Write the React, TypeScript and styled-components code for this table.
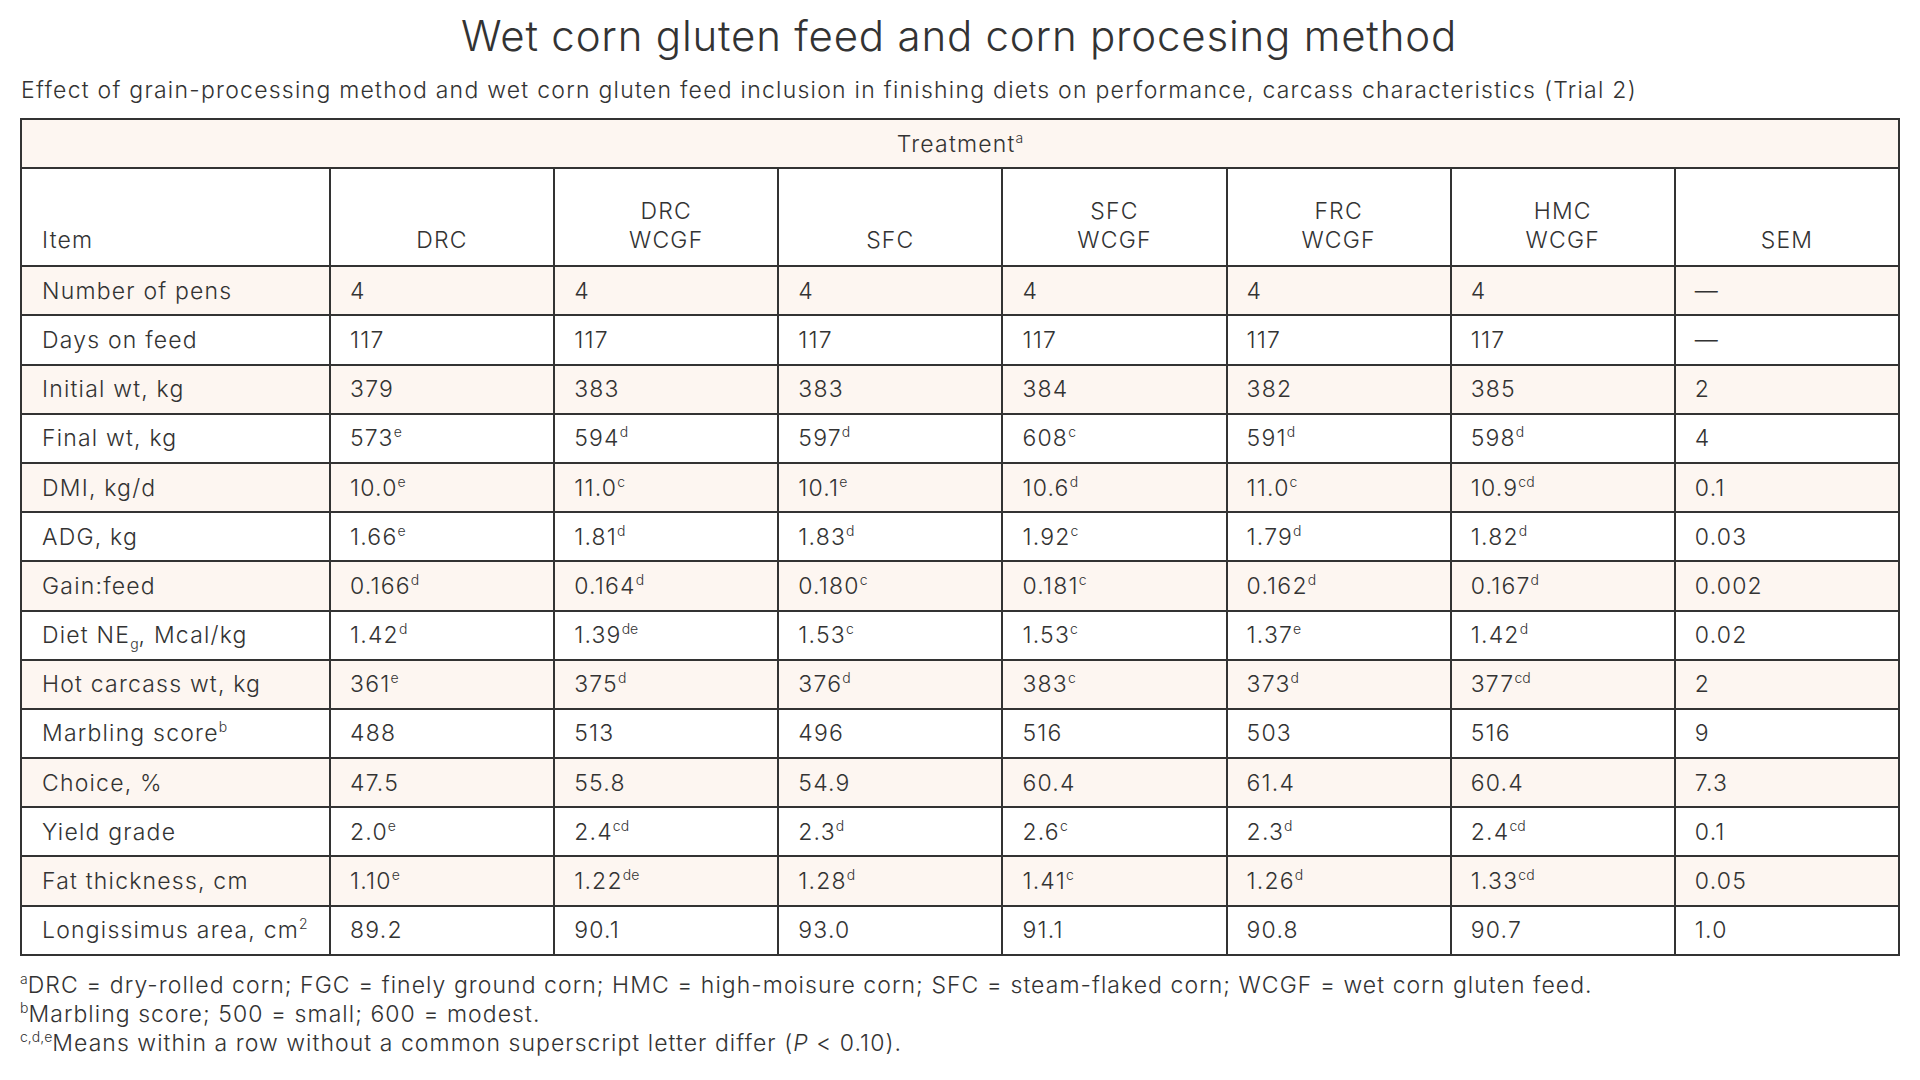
import styled, { createGlobalStyle } from "styled-components";

const GlobalStyle = createGlobalStyle`
  html, body {
    margin: 0;
    padding: 0;
    background: #ffffff;
  }
  body {
    font-family: Inter, "Open Sans", "Liberation Sans", sans-serif;
    color: #2e2e2e;
  }
`;

const Page = styled.div`
  width: 1920px;
  height: 1080px;
  box-sizing: border-box;
  padding: 10px 22px 0 20px;
  overflow: hidden;
`;

const Title = styled.h1`
  margin: 0;
  text-align: center;
  font-size: 42px;
  font-weight: 300;
  letter-spacing: 0.8px;
  line-height: 52px;
  color: #333;
`;

const Subtitle = styled.p`
  margin: 12px 0 0 1px;
  font-size: 23px;
  font-weight: 300;
  letter-spacing: 1.25px;
  line-height: 32px;
  color: #333;
`;

const Table = styled.table`
  margin-top: 12px;
  width: 1880px;
  border-collapse: collapse;
  table-layout: fixed;
  border: 2px solid #333;
  font-size: 23px;
  font-weight: 300;
  letter-spacing: 1.2px;
  color: #333;
`;

const Row = styled.tr<{ $shaded?: boolean }>`
  height: 49.2px;
  background: ${(p) => (p.$shaded ? "#fdf6f1" : "#ffffff")};
  border-bottom: 2px solid #333;
`;

const SpanCell = styled.th`
  font-weight: 300;
  text-align: center;
  padding: 0;
`;

const HeadCell = styled.th<{ $left?: boolean }>`
  box-sizing: border-box;
  height: 98px;
  font-weight: 300;
  text-align: ${(p) => (p.$left ? "left" : "center")};
  vertical-align: bottom;
  padding: 0 0 10px ${(p) => (p.$left ? "20px" : "0")};
  line-height: 29px;
  border-left: 2px solid #333;
  &:first-child {
    border-left: none;
  }
`;

const Cell = styled.td<{ $item?: boolean }>`
  padding: 0 0 0 ${(p) => (p.$item ? "20px" : "19px")};
  border-left: 2px solid #333;
  white-space: nowrap;
  &:first-child {
    border-left: none;
  }
`;

const Sup = styled.sup`
  font-size: 14px;
  vertical-align: 9px;
  line-height: 0;
  letter-spacing: 0;
  margin-left: 0;
`;

const Sub = styled.sub`
  font-size: 14px;
  vertical-align: -6px;
  line-height: 0;
  letter-spacing: 0;
`;

const Notes = styled.div`
  margin-top: 15px;
  font-size: 23px;
  font-weight: 300;
  letter-spacing: 1.05px;
  line-height: 29px;
  color: #333;
`;

const Note = styled.p`
  margin: 0;
`;

type Val = [string, string?];

const cols = [
  ["DRC"],
  ["DRC", "WCGF"],
  ["SFC"],
  ["SFC", "WCGF"],
  ["FRC", "WCGF"],
  ["HMC", "WCGF"],
  ["SEM"],
];

const rows: { label: React.ReactNode; vals: Val[] }[] = [
  { label: "Number of pens", vals: [["4"], ["4"], ["4"], ["4"], ["4"], ["4"], ["—"]] },
  { label: "Days on feed", vals: [["117"], ["117"], ["117"], ["117"], ["117"], ["117"], ["—"]] },
  { label: "Initial wt, kg", vals: [["379"], ["383"], ["383"], ["384"], ["382"], ["385"], ["2"]] },
  { label: "Final wt, kg", vals: [["573", "e"], ["594", "d"], ["597", "d"], ["608", "c"], ["591", "d"], ["598", "d"], ["4"]] },
  { label: "DMI, kg/d", vals: [["10.0", "e"], ["11.0", "c"], ["10.1", "e"], ["10.6", "d"], ["11.0", "c"], ["10.9", "cd"], ["0.1"]] },
  { label: "ADG, kg", vals: [["1.66", "e"], ["1.81", "d"], ["1.83", "d"], ["1.92", "c"], ["1.79", "d"], ["1.82", "d"], ["0.03"]] },
  { label: "Gain:feed", vals: [["0.166", "d"], ["0.164", "d"], ["0.180", "c"], ["0.181", "c"], ["0.162", "d"], ["0.167", "d"], ["0.002"]] },
  {
    label: (
      <>
        Diet NE<Sub>g</Sub>, Mcal/kg
      </>
    ),
    vals: [["1.42", "d"], ["1.39", "de"], ["1.53", "c"], ["1.53", "c"], ["1.37", "e"], ["1.42", "d"], ["0.02"]],
  },
  { label: "Hot carcass wt, kg", vals: [["361", "e"], ["375", "d"], ["376", "d"], ["383", "c"], ["373", "d"], ["377", "cd"], ["2"]] },
  {
    label: (
      <>
        Marbling score<Sup>b</Sup>
      </>
    ),
    vals: [["488"], ["513"], ["496"], ["516"], ["503"], ["516"], ["9"]],
  },
  { label: "Choice, %", vals: [["47.5"], ["55.8"], ["54.9"], ["60.4"], ["61.4"], ["60.4"], ["7.3"]] },
  { label: "Yield grade", vals: [["2.0", "e"], ["2.4", "cd"], ["2.3", "d"], ["2.6", "c"], ["2.3", "d"], ["2.4", "cd"], ["0.1"]] },
  { label: "Fat thickness, cm", vals: [["1.10", "e"], ["1.22", "de"], ["1.28", "d"], ["1.41", "c"], ["1.26", "d"], ["1.33", "cd"], ["0.05"]] },
  {
    label: (
      <>
        Longissimus area, cm<Sup>2</Sup>
      </>
    ),
    vals: [["89.2"], ["90.1"], ["93.0"], ["91.1"], ["90.8"], ["90.7"], ["1.0"]],
  },
];

export default function App() {
  return (
    <>
      <GlobalStyle />
      <Page>
        <Title>Wet corn gluten feed and corn procesing method</Title>
        <Subtitle>
          Effect of grain-processing method and wet corn gluten feed inclusion in finishing diets on
          performance, carcass characteristics (Trial 2)
        </Subtitle>
        <Table>
          <colgroup>
            <col style={{ width: 309 }} />
            {cols.map((_, i) => (
              <col key={i} />
            ))}
          </colgroup>
          <thead>
            <Row $shaded>
              <SpanCell colSpan={8}>
                Treatment<Sup>a</Sup>
              </SpanCell>
            </Row>
            <Row>
              <HeadCell $left>Item</HeadCell>
              {cols.map((c, i) => (
                <HeadCell key={i}>
                  {c.map((line, j) => (
                    <div key={j}>{line}</div>
                  ))}
                </HeadCell>
              ))}
            </Row>
          </thead>
          <tbody>
            {rows.map((r, i) => (
              <Row key={i} $shaded={i % 2 === 0}>
                <Cell $item>{r.label}</Cell>
                {r.vals.map(([v, s], j) => (
                  <Cell key={j}>
                    {v}
                    {s && <Sup>{s}</Sup>}
                  </Cell>
                ))}
              </Row>
            ))}
          </tbody>
        </Table>
        <Notes>
          <Note>
            <Sup>a</Sup>DRC = dry-rolled corn; FGC = finely ground corn; HMC = high-moisure corn; SFC =
            steam-flaked corn; WCGF = wet corn gluten feed.
          </Note>
          <Note>
            <Sup>b</Sup>Marbling score; 500 = small; 600 = modest.
          </Note>
          <Note>
            <Sup>c,d,e</Sup>Means within a row without a common superscript letter differ (<i>P</i> &lt; 0.10).
          </Note>
        </Notes>
      </Page>
    </>
  );
}
